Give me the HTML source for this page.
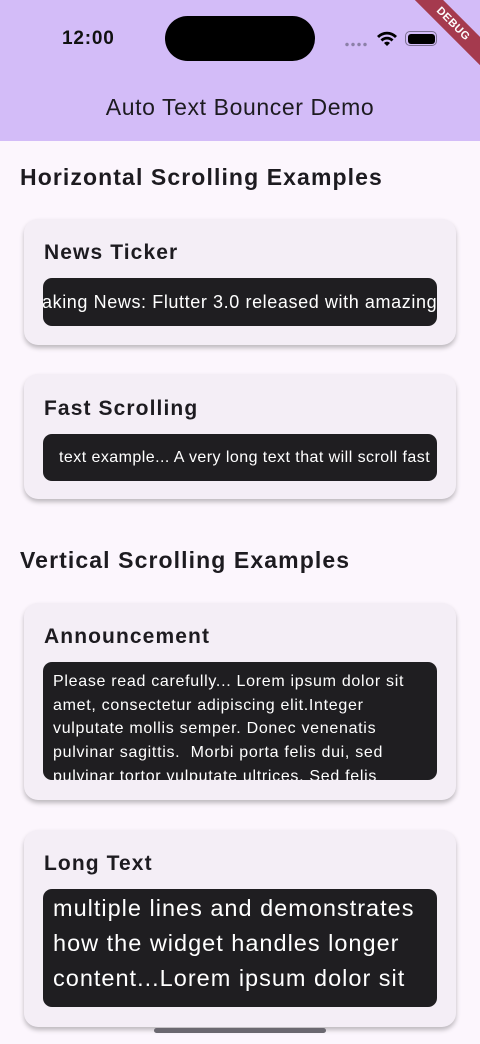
<!DOCTYPE html>
<html><head><meta charset="utf-8"><style>
*{margin:0;padding:0;box-sizing:border-box}
body{width:480px;height:1044px;overflow:hidden;background:#fcf6fd;font-family:"Liberation Sans",sans-serif;position:relative;color:#1d1b20}
.bar{position:absolute;left:0;top:0;width:480px;height:141px;background:#d3bcf8}
.time{position:absolute;left:62px;top:28px;font-size:19px;font-weight:bold;color:#111;letter-spacing:0.8px}
.island{position:absolute;left:165px;top:16px;width:150px;height:45px;background:#000;border-radius:23px}
.title{position:absolute;left:0;width:480px;top:94px;text-align:center;font-size:23px;color:#1d1b20;letter-spacing:0.6px}
.h{position:absolute;left:20px;font-size:23px;font-weight:bold;color:#1d1b20;letter-spacing:1.1px}
.card{position:absolute;left:24px;width:432px;background:#f4eef6;border-radius:14px;box-shadow:0 3px 5px rgba(0,0,0,.25)}
.ct{position:absolute;left:20px;font-size:21px;font-weight:bold;letter-spacing:1.1px}
.box{position:absolute;left:19px;width:394px;background:#1f1e21;border-radius:9px;color:#fff;overflow:hidden;white-space:nowrap}
</style></head><body>
<div class="bar"></div>
<div class="time">12:00</div>
<div class="island"></div>
<div style="position:absolute;left:344px;top:42px;width:24px;height:5px;background:radial-gradient(circle,#8c80a8 1.5px,transparent 2px) 0 0/6px 5px"></div>
<svg style="position:absolute;left:376px;top:30px" width="22" height="17" viewBox="0 0 22 17"><path d="M1 6a14 14 0 0 1 20 0l-2 2a11 11 0 0 0-16 0z M4.5 9.5a9 9 0 0 1 13 0l-2 2a6 6 0 0 0-9 0z M8 13a4 4 0 0 1 6 0l-3 3z" fill="#000"/></svg>
<div style="position:absolute;left:405px;top:31px;width:32px;height:15px;border:1.5px solid #7a6e90;border-radius:5px;padding:1.5px"><div style="width:100%;height:100%;background:#000;border-radius:3px"></div></div>
<div style="position:absolute;left:398px;top:14px;width:110px;height:20px;background:#a53a4e;transform:rotate(45deg);color:#fff;font-size:11px;font-weight:bold;text-align:center;line-height:20px;letter-spacing:.5px">DEBUG</div>
<div class="title">Auto Text Bouncer Demo</div>

<div class="h" style="top:164px">Horizontal Scrolling Examples</div>
<div class="card" style="top:219px;height:126px"><div class="ct" style="top:22px">News Ticker</div>
<div class="box" style="top:59px;height:48px;font-size:18px;line-height:48px;letter-spacing:0.6px"><span style="margin-left:-1px">aking News: Flutter 3.0 released with amazing</span></div></div>
<div class="card" style="top:374px;height:125px"><div class="ct" style="top:23px">Fast Scrolling</div>
<div class="box" style="top:60px;height:47px;font-size:16px;line-height:47px;letter-spacing:0.45px"><span style="margin-left:16px">text example... A very long text that will scroll fast</span></div></div>

<div class="h" style="top:547px">Vertical Scrolling Examples</div>
<div class="card" style="top:603px;height:197px"><div class="ct" style="top:22px">Announcement</div>
<div class="box" style="top:59px;height:118px;font-size:16px;line-height:23.7px;padding:8px 10px 0 10px;letter-spacing:0.7px">Please read carefully... Lorem ipsum dolor sit<br>amet, consectetur adipiscing elit.Integer<br>vulputate mollis semper. Donec venenatis<br>pulvinar sagittis.&nbsp; Morbi porta felis dui, sed<br>pulvinar tortor vulputate ultrices. Sed felis</div></div>
<div class="card" style="top:830px;height:197px"><div class="ct" style="top:22px">Long Text</div>
<div class="box" style="top:59px;height:118px;font-size:23.5px;line-height:35px;padding:2px 10px 0 10px;letter-spacing:1px">multiple lines and demonstrates<br>how the widget handles longer<br>content...Lorem ipsum dolor sit</div></div>
<div style="position:absolute;left:154px;top:1028px;width:172px;height:5px;background:#6b6870;border-radius:3px"></div>
</body></html>
